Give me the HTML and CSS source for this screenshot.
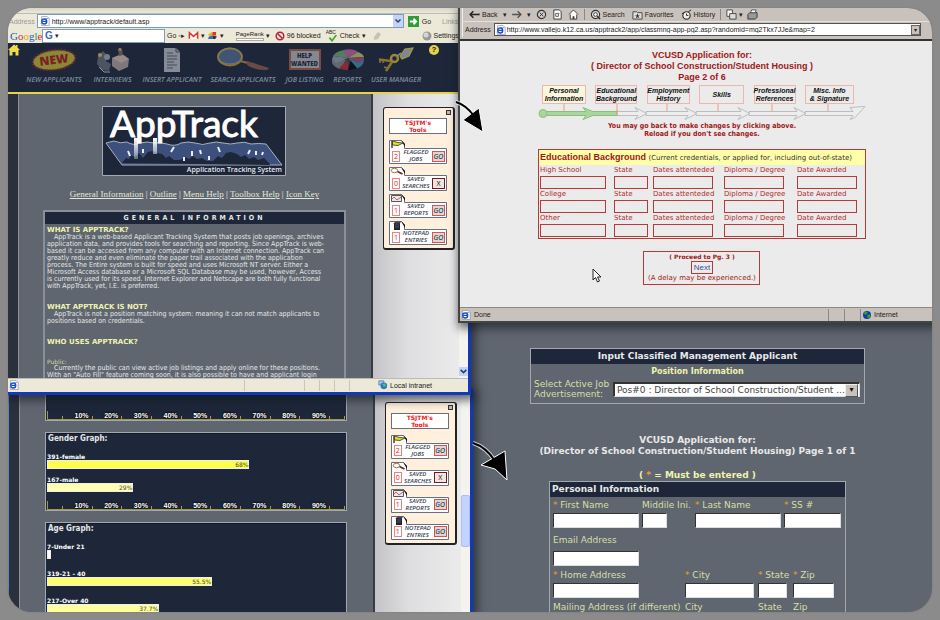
FILE: index.html
```
<!DOCTYPE html>
<html lang="en">
<head>
<meta charset="utf-8">
<title>AppTrack</title>
<link rel="stylesheet" href="styles.css">
</head>
<body>
<svg class="defs" aria-hidden="true">
  <symbol id="i-flag" viewBox="0 0 16 9"><path d="M3 1v7" stroke="#111" stroke-width="1.2"/><path d="M3.500 1L9 2.500L14 3L9 5.500L3.500 5z" fill="#dfe01a" stroke="#332" stroke-width=".8"/></symbol>
  <symbol id="i-lens" viewBox="0 0 16 9"><ellipse cx="5.500" cy="3.500" rx="3.200" ry="2.200" fill="#fff" stroke="#a5763d"/><path d="M8.500 4.500l5 2.500" stroke="#6d2b1c" stroke-width="1.800"/></symbol>
  <symbol id="i-mail" viewBox="0 0 16 9"><path d="M2.500 1.500h10v6h-10z" fill="#e8e8ee" stroke="#555"/><path d="M3 5l2-2 3 3 4-3" fill="none" stroke="#c33" stroke-width=".8"/></symbol>
  <symbol id="i-pad" viewBox="0 0 16 9"><path d="M5 2h6v7H5z" fill="#223"/><path d="M4 2.500l3-2h5l-1 2z" fill="#445"/><path d="M6 4h4M6 6h4" stroke="#778" stroke-width=".6"/></symbol>
  <symbol id="i-folder" viewBox="0 0 58 24"><path d="M.5 23.500V.5H12.500l3 3.500V8.500H57.500V23.500z" fill="#fff" stroke="#667083"/><path d="M12 0l4 4v3z" fill="#111"/></symbol>
  <symbol id="i-ie" viewBox="0 0 12 12"><path d="M2 .5h6.500l2.500 2.500v8.500H2z" fill="#fff" stroke="#888" stroke-width=".8"/><circle cx="5" cy="6.500" r="3" fill="none" stroke="#1a4ed0" stroke-width="1.800"/><path d="M2.500 6.500h5.500" stroke="#1a4ed0" stroke-width="1.400"/><path d="M1 9Q4 2 10 3" fill="none" stroke="#3a86e0" stroke-width=".8"/></symbol>
  <symbol id="i-globe" viewBox="0 0 12 12"><circle cx="6" cy="6" r="4.800" fill="#1238b0"/><path d="M2 4q2-3 4-2l1 2-3 2zM6 6l4-1 0 4-3 1z" fill="#28a428"/></symbol>
</svg>

<main class="desk">

  <section class="applicant">
    <div class="panel position">
      <h2>Input Classified Management Applicant</h2>
      <p class="sub">Position Information</p>
      <div class="pick">
        <label for="job">Select Active Job Advertisement:</label>
        <div class="drop"><select id="job"><option>Pos#0 : Director of School Construction/Student ...</option></select></div>
      </div>
    </div>
    <h1>VCUSD Application for:<br>(Director of School Construction/Student Housing) Page 1 of 1</h1>
    <p class="must">( <i>*</i> = Must be entered )</p>
    <form class="panel personal">
      <h2>Personal Information</h2>
      <div class="row names">
        <label><span><i>*</i> First Name</span><input type="text"></label>
        <label><span>Middile Ini.</span><input class="ini" type="text"></label>
        <label><span><i>*</i> Last Name</span><input type="text"></label>
        <label><span><i>*</i> SS #</span><input type="text"></label>
      </div>
      <div class="row email">
        <label><span>Email Address</span><input type="text"></label>
      </div>
      <div class="row home">
        <label><span><i>*</i> Home Address</span><input class="wide" type="text"></label>
        <label><span><i>*</i> City</span><input type="text"></label>
        <label><span><i>*</i> State</span><input type="text"></label>
        <label><span><i>*</i> Zip</span><input type="text"></label>
      </div>
      <div class="row home">
        <label><span>Mailing Address (if different)</span><input class="wide" type="text"></label>
        <label><span>City</span><input type="text"></label>
        <label><span>State</span><input type="text"></label>
        <label><span>Zip</span><input type="text"></label>
      </div>
    </form>
  </section>

  <section class="win graphs">
    <div class="body">
      <div class="page">
        <div class="panel graph first">
          <div class="axis"><span></span><span>10%</span><span>20%</span><span>30%</span><span>40%</span><span>50%</span><span>60%</span><span>70%</span><span>80%</span><span>90%</span><span></span></div>
        </div>
        <div class="panel graph">
          <h2>Gender Graph:</h2>
          <p>391-female</p><div class="bar b1" style="width:68%">68%</div>
          <p>167-male</p><div class="bar b4" style="width:29%">29%</div>
          <div class="axis"><span></span><span>10%</span><span>20%</span><span>30%</span><span>40%</span><span>50%</span><span>60%</span><span>70%</span><span>80%</span><span>90%</span><span></span></div>
        </div>
        <div class="panel graph age">
          <h2>Age Graph:</h2>
          <p>7-Under 21</p><div class="bar b0" style="width:1.2%"></div>
          <p>319-21 - 40</p><div class="bar b2" style="width:55.5%">55.5%</div>
          <p>217-Over 40</p><div class="bar b3" style="width:37.7%">37.7%</div>
        </div>
      </div>
      <aside class="side">
        <div class="tools">
          <button class="min" aria-label="Minimize"></button>
          <h3>TSJTM's<br>Tools</h3>
          <div class="tool"><svg class="folder"><use href="#i-folder"/></svg><svg class="ico"><use href="#i-flag"/></svg><b>2</b><span>FLAGGED<br>JOBS</span><button>GO</button></div>
          <div class="tool"><svg class="folder"><use href="#i-folder"/></svg><svg class="ico"><use href="#i-lens"/></svg><b>0</b><span>SAVED<br>SEARCHES</span><button class="x">X</button></div>
          <div class="tool"><svg class="folder"><use href="#i-folder"/></svg><svg class="ico"><use href="#i-mail"/></svg><b>1</b><span>SAVED<br>REPORTS</span><button>GO</button></div>
          <div class="tool"><svg class="folder"><use href="#i-folder"/></svg><svg class="ico"><use href="#i-pad"/></svg><b>1</b><span>NOTEPAD<br>ENTRIES</span><button>GO</button></div>
        </div>
      </aside>
      <div class="scroll"><i class="thumb"></i></div>
    </div>
  </section>

  <section class="win track">
    <header class="chrome">
      <div class="bar-address">
        <label for="addr1">Address</label>
        <div class="combo"><svg><use href="#i-ie"/></svg><input id="addr1" type="text" value="http://www/apptrack/default.asp"><button aria-label="Show addresses"><svg viewBox="0 0 8 8"><path d="M1.500 2.500L4 5l2.500-2.500" fill="none" stroke="#345" stroke-width="1.500"/></svg></button></div>
        <button class="go"><svg viewBox="0 0 12 12"><path d="M0 0h12v12H0z" fill="#2f9e3a"/><path d="M2 6h7M6 3l3 3-3 3" fill="none" stroke="#fff" stroke-width="2"/></svg>Go</button>
        <span class="links">Links</span>
      </div>
      <div class="bar-google">
        <span class="google"><b class="g1">G</b><b class="g2">o</b><b class="g3">o</b><b class="g1">g</b><b class="g4">l</b><b class="g2">e</b></span>
        <div class="search"><b>G</b><i>▾</i><input type="text" aria-label="Search"></div>
        <button class="t1">Go ◦▸</button>
        <svg class="t2" viewBox="0 0 12 9"><path d="M1 1h10v7H1z" fill="#fff"/><path d="M1.500 8V1.500L6 5.500l4.500-4V8" fill="none" stroke="#d8382e" stroke-width="1.700"/></svg>
        <span>▾</span>
        <svg class="t2" viewBox="0 0 12 10"><path d="M1 4l4-3 2 3-3 3z" fill="#e9b51d"/><path d="M6 1h4v4H6z" fill="#d43a2a"/><path d="M2 6l4-1 0 4H1z" fill="#3567d8"/><path d="M6 5l5 1-2 3H6z" fill="#333"/></svg>
        <span class="t3">▾</span>
        <span class="rank">PageRank<i></i></span><span>▾</span>
        <svg class="t4" viewBox="0 0 10 10"><path d="M1 1h8v8H1z" fill="#d9e3f5"/><circle cx="5" cy="5" r="3.800" fill="none" stroke="#c8202a" stroke-width="1.500"/><path d="M2.500 2.500l5 5" stroke="#c8202a" stroke-width="1.500"/></svg>
        <span class="t5">96 blocked</span>
        <span class="spell">ABC<svg viewBox="0 0 12 8"><path d="M3 3l3 3.500L11 0" fill="none" stroke="#4da62c" stroke-width="2"/></svg></span>
        <span>Check</span><span class="t7">▾</span>
        <svg class="t8" viewBox="0 0 10 10"><path d="M2 6l4-5 3 2-3 5-4 1z" fill="#c6c3b6"/></svg>
        <svg class="t9" viewBox="0 0 10 10"><circle cx="5" cy="5" r="4.500" fill="#9a9a9a"/><circle cx="4" cy="4" r="2.500" fill="#d5d5d5"/></svg>
        <span>Settings</span>
      </div>
    </header>
    <nav class="menu">
      <svg class="house" viewBox="0 0 12 12"><path d="M6 .5L0 6h1.500v5.500h3V8h3v3.500h3V6H12L9.500 3.500V1H8v1z" fill="#efdc4a"/></svg>
      <a href="#" class="m1"><svg viewBox="0 0 48 26"><g transform="rotate(-7 24 13)"><ellipse cx="24" cy="13" rx="21" ry="9.500" fill="#8b8736"/><ellipse cx="24" cy="13" rx="21.500" ry="10" fill="none" stroke="#7a2b2b" stroke-width="2" stroke-dasharray="1.500 1.500"/><text x="24" y="17" text-anchor="middle" class="newtxt">NEW</text></g></svg>NEW APPLICANTS</a>
      <a href="#" class="m2"><svg viewBox="0 0 36 26"><path d="M3 9l5-5 4 4-1 6 5 3-2 7-7-1-5-6z" fill="#4c5361"/><path d="M17 11l10-4 7 5-1 8-9 4-7-5z" fill="#80777a"/><path d="M17 11l10-4 7 5-8 4z" fill="#958b88"/><path d="M23 2l4 0 1 6-4 1z" fill="#58524c"/><circle cx="5" cy="8" r="2" fill="#a48a55"/><circle cx="25" cy="2.500" r="1.700" fill="#8b7a4e"/><path d="M4 20l5 5h6" stroke="#9095a0" fill="none"/><circle cx="12" cy="10" r="3" fill="#777c89"/></svg>INTERVIEWS</a>
      <a href="#" class="m3"><svg viewBox="0 0 20 26"><path d="M2 1h12l4 4v20H2z" fill="#868b96"/><path d="M14 1v4h4" fill="none" stroke="#3b4352"/><path d="M5 6h6M5 9h10M5 12h10M5 15h7M5 18h10M5 21h6" stroke="#414b62" stroke-width="1.200"/></svg>INSERT APPLICANT</a>
      <a href="#" class="m4"><svg viewBox="0 0 54 26"><ellipse cx="14" cy="10" rx="12" ry="8.500" fill="#405571" stroke="#8d7130" stroke-width="1.800"/><ellipse cx="14" cy="9" rx="12" ry="8" fill="none" stroke="#7c8084" stroke-width=".8"/><path d="M24 14l8 2" stroke="#806a4a" stroke-width="2"/><path d="M31 14l22 7-2 2q-14 0-20-5z" fill="#6b4a46"/></svg>SEARCH APPLICANTS</a>
      <a href="#" class="m5"><span class="wanted">HELP WANTED</span>JOB LISTING</a>
      <a href="#" class="m6"><svg viewBox="0 0 34 24"><path d="M1 10v5q3 7 16 7t16-7v-5z" fill="#303948"/><path d="M1 10v5q2 4 8 6l6-9z" fill="#5f6873"/><path d="M8 20q5 2 9 2V12z" fill="#8e2734"/><path d="M17 22q6 0 9-2l-6-9z" fill="#0d131d"/><path d="M26 20q7-2 7-10L18 11z" fill="#2c6f86"/><path d="M17 10L2 8Q5 3 14 2z" fill="#507e5e"/><path d="M17 10L12 2q10-2 15 2z" fill="#8c4f83"/><path d="M17 10l10-6q5 2 6 5z" fill="#8d9152"/><path d="M17 10l16-1q0 4-6 6z" fill="#7b3f68"/><path d="M2 8l15 2-12 5q-4-3-3-7z" fill="#6f7784"/></svg>REPORTS</a>
      <a href="#" class="m7"><svg viewBox="0 0 38 26"><g fill="none" stroke="#8c7230"><path d="M14 14L2 12.500" stroke-width="2.500"/><path d="M3 13v3M6 13v3" stroke-width="1.500"/><path d="M15 15L9 24" stroke-width="2.500"/><path d="M10 21l-3-1" stroke-width="1.500"/><circle cx="17.500" cy="11.500" r="3.500" stroke="#a08439" stroke-width="2.500"/></g><path d="M20 9l4-3" stroke="#8a8f99" stroke-width="1.500"/><path d="M23 9l5-7 8-1-4 8-7 3z" fill="#7c8895" stroke="#a99a37" stroke-width="1.200"/></svg>USER MANAGER</a>
      <a href="#" class="help" aria-label="Help">?</a>
    </nav>
    <div class="body">
      <div class="page">
        <svg class="logo" viewBox="0 0 184 70" role="img" aria-label="AppTrack Application Tracking System">
          <defs><linearGradient id="drip" x1="0" y1="0" x2="0" y2="1"><stop offset="0" stop-color="#fff"/><stop offset="1" stop-color="#fff" stop-opacity=".3"/></linearGradient></defs>
          <path d="M.5.5h183v69H.5z" fill="#1d2739" stroke="#a5a9b0"/>
          <path d="M4 37l8-2q6 3 13 1 6 4 13 1 7-2 14 0 6-1 13 1 8 3 14-1 7-2 14 0 8 3 15 0 6-2 13 0 8 2 14 0 8-2 14 1 8-1 15 0l16 21H20z" fill="#3d4f7c" stroke="#a9b0bd"/>
          <path d="M20 57l4-5 3 1 2-4 4 2 4-4 4 5 5-6 4-1 5 2 5 1 4 4 3-2 5 4 6 0 5-3 4 2 4-3 4 3 5-1 5 3 6 0 5-5 4 2 4-5 5-1 6 2 4 3 4-2 4 4 5-2 4 3 6-2 5 5 1 2z" fill="#1d2739"/>
          <path d="M28 50l-2-5M41 47l0-4M69 46l3-5M118 46l-2-5M82 55v-4M90 50l0-5M107 54v-4M99 48l-1-4M146 48l2-4M154 49v-4M160 49l1-3" stroke="#e9ecf3" stroke-width="2"/>
          <text class="logo-name" x="8" y="31">AppTrack</text>
          <path d="M32 32h4v21h-4zM51 32h4v16h-4z" fill="url(#drip)"/>
          <text class="logo-sub" x="180" y="66" text-anchor="end">Application Tracking System</text>
        </svg>
        <p class="toc"><a href="#">General Information</a> | <a href="#">Outline</a> | <a href="#">Menu Help</a> | <a href="#">Toolbox Help</a> | <a href="#">Icon Key</a></p>
        <article class="panel info">
          <h2>GENERAL INFORMATION</h2>
          <h3>WHAT IS APPTRACK?</h3>
          <p>AppTrack is a web-based Applicant Tracking System that posts job openings, archives<br>application data, and provides tools for searching and reporting. Since AppTrack is web-<br>based it can be accessed from any computer with an Internet connection. AppTrack can<br>greatly reduce and even eliminate the paper trail associated with the application<br>process. The Entire system is built for speed and uses Microsoft NT server. Either a<br>Microsoft Access database or a Microsoft SQL Database may be used, however, Access<br>is currently used for its speed. Internet Explorer and Netscape are both fully functional<br>with AppTrack, yet, I.E. is preferred.</p>
          <h3>WHAT APPTRACK IS NOT?</h3>
          <p>AppTrack is not a position matching system: meaning it can not match applicants to<br>positions based on credentials.</p>
          <h3>WHO USES APPTRACK?</h3>
          <h4>Public:</h4>
          <p>Currently the public can view active job listings and apply online for these positions.<br>With an "Auto Fill" feature coming soon, it is also possible to have and applicant login</p>
        </article>
      </div>
      <aside class="side">
        <div class="tools">
          <button class="min" aria-label="Minimize"></button>
          <h3>TSJTM's<br>Tools</h3>
          <div class="tool"><svg class="folder"><use href="#i-folder"/></svg><svg class="ico"><use href="#i-flag"/></svg><b>2</b><span>FLAGGED<br>JOBS</span><button>GO</button></div>
          <div class="tool"><svg class="folder"><use href="#i-folder"/></svg><svg class="ico"><use href="#i-lens"/></svg><b>0</b><span>SAVED<br>SEARCHES</span><button class="x">X</button></div>
          <div class="tool"><svg class="folder"><use href="#i-folder"/></svg><svg class="ico"><use href="#i-mail"/></svg><b>1</b><span>SAVED<br>REPORTS</span><button>GO</button></div>
          <div class="tool"><svg class="folder"><use href="#i-folder"/></svg><svg class="ico"><use href="#i-pad"/></svg><b>1</b><span>NOTEPAD<br>ENTRIES</span><button>GO</button></div>
        </div>
      </aside>
      <div class="scroll"><button class="down" aria-label="Scroll down"><svg viewBox="0 0 8 8"><path d="M1.500 2.500L4 5l2.500-2.500" fill="none" stroke="#345" stroke-width="1.500"/></svg></button></div>
    </div>
    <footer class="status"><svg class="st-ie"><use href="#i-ie"/></svg><i></i><i></i><i></i><i></i><i></i><span><svg viewBox="0 0 12 12"><path d="M1 1h6v5H1z" fill="#9fc6ea" stroke="#58a"/><circle cx="7" cy="7" r="4" fill="#2c74d0"/><path d="M5 5l3-1 2 3-3 1z" fill="#5ac05a"/></svg>Local intranet</span></footer>
  </section>

  <section class="win school">
    <header class="chrome2">
      <div class="nav-row">
        <button><svg viewBox="0 0 10 10"><path d="M4 2L1 5l3 3M1 5h8V4" fill="none" stroke="#222" stroke-width="1.300"/></svg>Back</button><span class="n0">▾</span>
        <svg class="n1" viewBox="0 0 10 10"><path d="M6 2l3 3-3 3M9 5H1" fill="none" stroke="#555" stroke-width="1.300"/></svg><span class="n2">▾</span>
        <svg class="n3" viewBox="0 0 12 12"><circle cx="6" cy="6" r="4.500" fill="#ccc" stroke="#333" stroke-width="1.300"/><path d="M4 4l4 4M8 4l-4 4" stroke="#333"/></svg>
        <svg class="n3" viewBox="0 0 12 12"><path d="M2 1h6l2 2v8H2z" fill="#fff" stroke="#333"/><path d="M4 5h3v3H4zM7 4l1 1" fill="none" stroke="#555"/></svg>
        <svg class="n3" viewBox="0 0 12 12"><path d="M1 6l5-5 5 5M2.500 6v5h7V6" fill="#fff" stroke="#333"/><path d="M5 8h2v3H5z" fill="#333"/></svg>
        <i class="sep"></i>
        <button class="n4"><svg viewBox="0 0 12 12"><circle cx="6" cy="6" r="4.500" fill="#ddd" stroke="#333" stroke-width="1.200"/><circle cx="6" cy="6" r="2" fill="#fff" stroke="#333"/><path d="M8 8l3 3" stroke="#222" stroke-width="1.500"/></svg>Search</button>
        <button class="n5"><svg viewBox="0 0 12 12"><path d="M1 3h4l1 1h5v7H1z" fill="#ddd" stroke="#444"/><path d="M6 5l1 2h2l-2 1 1 2-2-1-2 1 1-2-2-1h2z" fill="#333"/></svg>Favorites</button>
        <button class="n6"><svg viewBox="0 0 12 12"><circle cx="6" cy="7" r="4" fill="#eee" stroke="#333" stroke-width="1.300"/><path d="M6 5v2h2M8 3l3-2M1 5l3-1" fill="none" stroke="#222"/></svg>History</button>
        <i class="sep"></i>
        <svg class="n7" viewBox="0 0 12 12"><path d="M1 1h6v7H1z" fill="#fff" stroke="#444"/><path d="M4 5h7v6H4z" fill="#ddd" stroke="#444"/></svg><span>▾</span>
        <svg class="n8" viewBox="0 0 12 12"><path d="M1 6l2-2h8v5l-2 2H1z" fill="#999" stroke="#333"/><path d="M4 4l1-3h5L9 4z" fill="#fff" stroke="#333" stroke-width=".8"/></svg>
      </div>
      <div class="addr-row">
        <label for="addr2">Address</label>
        <div class="combo"><svg><use href="#i-ie"/></svg><input id="addr2" type="text" value="http://www.vallejo.k12.ca.us/apptrack2/app/classmng-app-pg2.asp?randomid=mq2Tkx7JJe&amp;map=2"><button aria-label="Show addresses">▾</button></div>
      </div>
    </header>
    <div class="form-page">
      <h1>VCUSD Application for:<br>( Director of School Construction/Student Housing )<br>Page 2 of 6</h1>
      <div class="steps">
        <div class="boxes">
          <a href="#" class="on">Personal<br>Information</a><a href="#">Educational<br>Background</a><a href="#">Employment<br>History</a><a href="#">Skills</a><a href="#">Professional<br>References</a><a href="#">Misc. Info<br>&amp; Signature</a>
        </div>
        <svg viewBox="0 0 328 18"><g stroke="#f0b5ab" stroke-width="1.500"><path d="M26 0v8M79 0v8M129 0v8M180 0v8M234 0v8M290 0v8"/></g>
          <g fill="#ededed" stroke="#bdbdbd"><path d="M78 7.500h22l-3-4 12 6-12 6 3-4H78zM108 7.500h42l-3-4 12 6-12 6 3-4h-42zM158 7.500h45l-3-4 12 6-12 6 3-4h-45zM211 7.500h48l-3-4 12 6-12 6 3-4h-48zM267 7.500h48l-3-4 15-1-10 11-5 2 3-4h-48z"/></g>
          <g fill="#a9d79b" stroke="#8cbf7f"><path d="M8 7.500h40l-3-4 10 4h24v4H55l-10 4 3-4H8z"/><circle cx="5" cy="9.500" r="4"/></g><path d="M79 6v6" stroke="#e39b90"/></svg>
      </div>
      <p class="hint">You may go back to make changes by clicking above.<br>Reload if you don't see changes.</p>
      <form class="edu">
        <h2>Educational Background <small>(Current credentials, or applied for, including out-of-state)</small></h2>
        <div class="edu-row">
          <label>High School<input type="text"></label><label>State<input type="text"></label><label>Dates attenteded<input type="text"></label><label>Diploma / Degree<input type="text"></label><label>Date Awarded<input type="text"></label>
        </div>
        <div class="edu-row">
          <label>College<input type="text"></label><label>State<input type="text"></label><label>Dates attenteded<input type="text"></label><label>Diploma / Degree<input type="text"></label><label>Date Awarded<input type="text"></label>
        </div>
        <div class="edu-row">
          <label>Other<input type="text"></label><label>State<input type="text"></label><label>Dates attenteded<input type="text"></label><label>Diploma / Degree<input type="text"></label><label>Date Awarded<input type="text"></label>
        </div>
      </form>
      <div class="proceed"><b>( Proceed to Pg. 3 )</b><button>Next</button><span>(A delay may be experienced.)</span></div>
    </div>
    <footer class="status2"><svg><use href="#i-ie"/></svg><span class="done">Done</span><i></i><i></i><span class="zone"><svg><use href="#i-globe"/></svg>Internet</span></footer>
  </section>

  <svg class="cursor" viewBox="0 0 10 15"><path d="M1 1v11l2.500-2.500L5.500 14l2-1-2-4H9z" fill="#fff" stroke="#222"/></svg>
  <svg class="arrow a1" viewBox="0 0 42 42"><path class="halo" d="M4 6Q14 9 22 20"/><path class="head" d="M11 24L27 12L31 36z"/><path class="shaft" d="M4 6Q14 9 22 20"/></svg>
  <svg class="arrow a2" viewBox="0 0 42 46"><path class="halo" d="M1 4Q14 8 23 22"/><path class="head" d="M9 26L33 12L35 41L23 30z"/><path class="shaft" d="M1 4Q14 8 23 22"/></svg>
</main>
</body>
</html>
```
FILE: styles.css
```
* { box-sizing: border-box; }
html, body { height: 100%; }
body { margin: 0; padding: 8px; background: #8b8b8b; font-family: "DejaVu Sans", Verdana, sans-serif; font-size: 8px; color: #e6e6e6; overflow: hidden; }
h1, h2, h3, h4, p { margin: 0; }
i { font-style: normal; }
button, input, select { font: inherit; color: inherit; padding: 0; margin: 0; border: 0; background: none; border-radius: 0; min-width: 0; }
svg { display: block; flex: none; }
.defs { position: absolute; width: 0; height: 0; }

.desk { position: relative; height: 100%; border-radius: 24px; overflow: hidden; background: #5f6670; box-shadow: 0 0 2px #777; }
.win { position: absolute; display: flex; flex-direction: column; overflow: hidden; }
.track { left: 0; top: 0; width: 50.1%; height: 64%; border: solid #1139b8; border-width: 0 3px 3px 0; background: #ece9d8; }
.graphs { left: 0; top: 63%; width: 50.3%; bottom: 0; border: solid #1139b8; border-width: 0 3px 0 1px; border-left-color: #5b85c4; }
.school { left: 48.7%; top: 0; width: 52.6%; height: 52.2%; background: #c9c1bb; border: solid #444; border-width: 0 0 2px 2px; }
.track, .school, .graphs { box-shadow: 2px 3px 9px 2px rgba(20, 24, 30, .65); }

/* shared page frame */
.body { flex: 1; min-height: 0; display: flex; }
.page { flex: 1; min-width: 0; background: #5f6670; border-left: 10px solid #2a313d; box-shadow: inset 1px 0 #8d929a; padding: 0 25px; overflow: hidden; }
.graphs .page { padding: 0 26px; }
.side { width: 88px; border-left: 2px solid #383c42; background: linear-gradient(90deg, #c4c4c8, #dedee0 40%, #ebebec); padding-left: 10px; }
.scroll { width: 9px; background: #f4f3ee; display: flex; flex-direction: column; justify-content: flex-end; }
.scroll .down { height: 9px; background: #c3d3fd; margin-bottom: 2px; }
.thumb { height: 52px; background: #c3d3fd; border: 1px solid #a9bff5; border-radius: 2px; margin-bottom: 65px; }
.panel { border: 1px solid #a3a8ae; }

/* toolbars */
.chrome { height: 35px; flex: none; padding-top: 5px; color: #222; font-family: "Liberation Sans", Arial, sans-serif; font-size: 7px; background: linear-gradient(#d8d5c6, #ece9d8 5px); overflow: hidden; }
.chrome div { display: flex; align-items: center; }
.chrome .bar-address { height: 15px; border-top: 1px solid #bbb; }
.bar-address > label { color: #999; padding-left: 1px; }
.chrome .combo { flex: none; width: 367px; height: 14px; margin-left: 2px; background: #fff; border: 1px solid #7f9db9; }
.combo svg { width: 10px; height: 10px; margin: 0 2px; }
.combo input { flex: 1; }
.chrome .combo button { width: 10px; background: #c3d3fd; height: 12px; }
.combo button svg { width: 8px; height: 8px; margin: 2px 1px; }
.go { display: flex; align-items: center; gap: 3px; margin-left: 4px; }
.go svg { width: 11px; height: 11px; }
.links { margin-left: 11px; color: #999; }
.chrome .bar-google { height: 15px; gap: 2px; white-space: nowrap; }
.google { font-family: "Liberation Serif", Georgia, serif; font-size: 11px; line-height: 12px; padding-left: 2px; width: 32px; }
.google b { font-weight: 400; }
.g1 { color: #2a56c6; } .g2 { color: #d0342c; } .g3 { color: #d9a514; } .g4 { color: #2d9b48; }
.chrome .search { width: 123px; flex: none; height: 14px; background: #fff; border: 1px solid #7f9db9; padding-left: 2px; gap: 2px; }
.search b { color: #3c66c8; font-size: 10px; }
.search input { flex: 1; }
.t1 { margin-right: 1px; }
.t2 { width: 11px; height: 9px; }
.t3 { margin-right: 10px; }
.rank { font-size: 6px; line-height: 6px; }
.rank i { display: block; height: 3px; border: 1px solid #aaa; background: #fff; margin-top: 1px; }
.t4 { width: 10px; height: 10px; margin-left: 3px; }
.t5 { margin-right: 3px; }
.spell { font-size: 5px; line-height: 5px; width: 12px; }
.spell svg { width: 12px; height: 7px; }
.t7 { margin-right: 4px; }
.t8 { width: 10px; height: 10px; margin-right: 38px; }
.t9 { width: 10px; height: 10px; }

/* icon menu */
.menu { flex: none; display: flex; align-items: flex-start; position: relative; height: 51px; background: #1d2739; border-bottom: 2px solid #e6d24c; padding: 4px 0 0 16px; font-family: "Open Sans", sans-serif; font-style: italic; font-weight: 600; font-size: 7px; }
.menu a { display: flex; flex-direction: column; align-items: center; gap: 2px; color: #8089a0; text-decoration: none; white-space: nowrap; line-height: 10px; flex: none; }
.menu a svg { height: 26px; }
.m1 { width: 60px; } .m1 svg { width: 48px; }
.m2 { width: 57px; } .m2 svg { width: 36px; }
.m3 { width: 62px; } .m3 svg { width: 20px; }
.m4 { width: 80px; } .m4 svg { width: 54px; }
.m5 { width: 43px; }
.m6 { width: 43px; } .m6 svg { width: 34px; }
.m7 { width: 54px; } .m7 svg { width: 38px; }
.newtxt { font: 800 12px "Open Sans", sans-serif; fill: #7a1f24; }
.wanted { width: 32px; height: 21px; margin: 2px 0 3px; padding: 1px 0; border: 2px solid #7b4a40; background: #84888f; color: #1d2739; font: 800 6px/8px "Open Sans", sans-serif; text-align: center; white-space: normal; }
.house { position: absolute; left: 0; top: 1px; width: 12px; height: 12px; }
.menu .help { position: absolute; right: 29px; top: 2px; width: 10px; height: 10px; border-radius: 50%; background: #e6d24c; color: #222; font: 700 8px/10px "Liberation Sans", sans-serif; display: block; text-align: center; }

/* AppTrack page */
.logo { width: 184px; height: 70px; margin: 12px auto 0; overflow: visible; }
.logo-name { font: 37px "Lato", sans-serif; fill: #fff; stroke: #fff; stroke-width: 1px; }
.logo-sub { font: 600 7px "Open Sans", sans-serif; fill: #e6e9f0; }
.toc { margin-top: 13px; text-align: center; font: 9px/11px "Liberation Serif", "Times New Roman", serif; white-space: nowrap; }
.toc a { color: #e2e8d6; }
.info { margin-top: 10px; border-width: 2px; border-color: #8b9097; white-space: nowrap; }
.info h2 { background: #1d2739; font: 700 7px/12px "DejaVu Sans Condensed", "DejaVu Sans", sans-serif; letter-spacing: 3px; text-align: center; }
.info h3 { color: #eff3ae; font-size: 7px; line-height: 8px; margin-top: 2px; padding-left: 2px; }
.info p { font: 7px/7px "DejaVu Sans Condensed", "DejaVu Sans", sans-serif; text-indent: 7px; padding-left: 2px; margin-bottom: 13px; }
.info h4 { color: #cfdc9a; font-weight: 400; font-size: 6px; line-height: 7px; margin-top: 12px; padding-left: 2px; }
.status { flex: none; height: 14px; display: flex; align-items: center; border-top: 1px solid #bbb; color: #222; font: 7px "Liberation Sans", sans-serif; padding-left: 1px; }
.status svg { width: 10px; height: 10px; }
.status i { width: 15px; height: 11px; border-left: 1px solid #c9c6b4; }
.st-ie { margin-right: 225px; }
.status i:nth-of-type(1) { width: 60px; }
.status i:nth-of-type(5) { width: 29px; }
.status span { display: flex; gap: 2px; align-items: center; }

/* toolbox */
.tools { position: relative; width: 72px; height: 143px; margin-top: 13px; padding: 10px 6px 0 5px; background: #fff0de; border: 1px solid #222; border-right-width: 2px; border-bottom-width: 2px; border-radius: 3px; }
.min { position: absolute; right: 2px; top: 2px; width: 5px; height: 5px; border: 1px solid #333; background: #bbb; }
.tools h3 { color: #f01818; background: #fff; border: 1px solid #667083; font-size: 6px; line-height: 7px; text-align: center; height: 16px; width: 58px; }
.tool { position: relative; width: 58px; height: 24px; margin-top: 3px; padding: 8px 2px 0 3px; display: grid; grid-template-columns: 8px 1fr 13px; align-items: center; font-family: "Open Sans", sans-serif; color: #333b4e; }
.tools h3 + .tool { margin-top: 6px; }
.folder { position: absolute; left: 0; top: 0; width: 58px; height: 24px; }
.ico { position: absolute; left: 0; top: 0; width: 16px; height: 9px; }
.tool b, .tool span, .tool button { position: relative; }
.tool b { border: 1px solid #f08080; color: #e02020; font-size: 7px; line-height: 9px; font-weight: 400; text-align: center; }
.tool span { font-size: 6px; font-weight: 600; font-style: italic; line-height: 7px; text-align: center; white-space: nowrap; }
.tool button { height: 11px; border: 1px solid #e05050; background: #d8d8d8; color: #111; font-size: 7px; line-height: 9px; font-style: italic; }
.tool .x { border-color: #6b2020; font-style: normal; background: #f4e4e0; }

/* graphs */
.graph { background: #1d2739; margin-bottom: 11px; padding: 0 1px; box-shadow: inset 0 1px #10182a; }
.graph h2 { font: 700 8px/11px "DejaVu Sans Condensed", "DejaVu Sans", sans-serif; padding-left: 1px; }
.graph p { font-size: 6px; font-weight: 700; line-height: 7px; margin-top: 7px; color: #fff; }
.graph h2 + p { margin-top: 9px; }
.graph.age p { margin-top: 11px; }
.graph.age h2 + p { margin-top: 9px; }
.bar { height: 9px; border: 1px solid #eee; color: #444; font-size: 6px; line-height: 7px; text-align: right; }
.b0 { background: #fff; } .b1 { background: #ffff4a; } .b2 { background: #ffff70; } .b3 { background: #ffff9a; } .b4 { background: #ffffb0; }
.axis { display: grid; grid-template-columns: 1fr repeat(9, 2fr) 1fr; height: 9px; margin-top: 9px; border-bottom: 1px solid #a39a45; border-left: 1px solid #a39a45; font: 700 7px/9px "Liberation Sans", sans-serif; color: #fff; text-align: right; }
.axis span { padding-right: 4px; position: relative; text-shadow: 0 0 2px #000, 0 0 2px #000; }
.axis span::after { content: ""; position: absolute; right: 0; bottom: 0; width: 1px; height: 4px; background: #a39a45; }
.first .axis { margin-top: 21px; }

/* school application window */
.chrome2 { flex: none; height: 33px; border-bottom: 2px solid #333; color: #222; font: 8px "Liberation Sans", Arial, sans-serif; }
.nav-row, .addr-row { display: flex; align-items: center; border-left: 1px solid #eee; margin-left: 2px; }
.nav-row { height: 13px; padding-left: 6px; gap: 2px; font-size: 7px; }
.nav-row button { display: flex; align-items: center; gap: 2px; }
.nav-row svg { width: 11px; height: 11px; }
.n0 { margin-left: 3px; }
.n1 { margin-left: 2px; }
.n2 { margin: 0 3px; }
.n3 { margin-right: 3px; }
.sep { width: 1px; height: 11px; background: #888; }
.nav-row .n4 { margin-left: 3px; }
.nav-row .n5 { margin-left: 5px; }
.nav-row .n6 { margin-left: 5px; margin-right: 3px; }
.n7 { margin-left: 3px; }
.n8 { margin-left: 2px; }
.addr-row { height: 16px; border-top: 1px solid #e5e0dc; padding-left: 2px; font-size: 7px; }
.addr-row .combo { display: flex; align-items: center; width: 427px; height: 13px; margin-left: 3px; background: #fff; border: 1px solid #555; }
.addr-row .combo svg { margin: 0 1px; }
.addr-row .combo button { width: 9px; height: 10px; background: #c9c1bb; border: 1px solid #666; font-size: 6px; line-height: 6px; }
.form-page { flex: 1; min-height: 0; background: #ebebeb; color: #a01818; display: flex; flex-direction: column; align-items: center; padding-top: 9px; }
.form-page h1 { font: 700 9px/11px "Liberation Sans", Arial, sans-serif; text-align: center; }
.steps { width: 328px; margin-top: 2px; }
.boxes { display: grid; grid-template-columns: 44px 42px 43px 45px 42px 49px; justify-content: space-between; padding: 0 12px 0 4px; height: 19px; }
.boxes a { display: flex; align-items: center; justify-content: center; border: 1px solid #f0b5ab; color: #111; text-decoration: none; text-align: center; font: italic 700 7px/8px "Liberation Sans", Arial, sans-serif; }
.boxes .on { background: #f9f7dc; }
.steps svg { width: 100%; height: 18px; }
.hint { font: 700 7px/8px "DejaVu Sans Condensed", "DejaVu Sans", sans-serif; text-align: center; }
.edu { width: 328px; margin-top: 11px; border: 1px solid #b53a3a; padding-bottom: 1px; color: #b02c2c; }
.edu h2 { background: #ffffaa; color: #a01818; font: 700 9px/15px "Liberation Sans", Arial, sans-serif; padding-left: 1px; white-space: nowrap; }
.edu small { font: 7px "DejaVu Sans", sans-serif; color: #333; }
.edu-row { display: grid; grid-template-columns: 74px 39px 71px 73px 1fr; padding-left: 1px; }
.edu label { display: block; font-size: 7px; line-height: 11px; white-space: nowrap; }
.edu input { display: block; width: 60px; height: 13px; border: 1px solid #b53a3a; background: #ebebeb; }
.edu label:nth-child(1) input { width: 66px; }
.edu label:nth-child(2) input { width: 34px; }
.proceed { margin-top: 12px; width: 117px; height: 34px; border: 1px solid #b53a3a; display: flex; flex-direction: column; align-items: center; font-size: 7px; line-height: 9px; white-space: nowrap; }
.proceed b { font-size: 6px; }
.proceed button { width: 22px; height: 13px; border: 1px solid #b53a3a; color: #44508c; font: 8px/11px "Liberation Sans", sans-serif; }
.status2 { flex: none; height: 14px; display: flex; align-items: center; color: #222; font: 7px "Liberation Sans", sans-serif; padding-left: 1px; border-top: 1px solid #888; }
.status2 svg { width: 10px; height: 10px; }
.done { padding-left: 3px; flex: 1; }
.status2 i { width: 16px; height: 12px; border-left: 1px solid #888; }
.zone { width: 84px; height: 12px; border-left: 1px solid #888; display: flex; align-items: center; gap: 2px; padding-left: 1px; }

/* classified applicant page */
.applicant { height: 100%; padding: 340px 8px 0 463px; display: flex; flex-direction: column; align-items: center; color: #d6dfa4; font-size: 9px; }
.applicant h1, .applicant h2, .must { font-size: 9px; font-weight: 700; line-height: 11px; color: #e8e8e8; white-space: nowrap; }
.applicant h1 { text-align: center; margin-top: 31px; }
.applicant .must { color: #eff3ae; margin-top: 13px; }
.must i, .row i { color: #f0a020; }
.position { width: 335px; height: 56px; flex: none; }
.applicant h2 { background: #1d2739; line-height: 15px; padding: 0 2px; }
.position h2, .sub { text-align: center; }
.sub { font-size: 8px; font-weight: 700; line-height: 15px; color: #eff3ae; }
.pick { display: flex; align-items: center; gap: 1px; padding: 0 4px 0 3px; line-height: 10px; }
.pick label { width: 78px; flex: none; }
.drop { position: relative; flex: 1; min-width: 0; height: 15px; }
.drop select { display: block; appearance: none; width: 100%; height: 100%; background: #fff; color: #444; border: 2px solid #333; border-right: 1px solid #ddd; border-bottom: 1px solid #ddd; padding-left: 2px; font-size: 9px; }
.drop::after { content: "▾"; position: absolute; right: 2px; top: 2px; width: 11px; height: 11px; background: #c9c1bb; border: 1px solid #555; border-top-color: #eee; border-left-color: #eee; color: #111; font-size: 8px; line-height: 9px; text-align: center; pointer-events: none; }
.personal { width: 297px; flex: none; }
.row { display: grid; padding: 0 3px; white-space: nowrap; }
.row span { display: block; line-height: 16px; }
.row input { display: block; height: 15px; background: #fff; border: 1px solid #333; border-right-color: #ddd; border-bottom-color: #ddd; width: 100%; }
.row.names { grid-template-columns: 89px 53px 89px 57px; }
.names label:nth-child(1) input, .names label:nth-child(3) input { width: 86px; }
.row .ini { width: 25px; }
.email { padding-top: 4px; }
.email input { width: 86px; margin-top: 3px; }
.home { grid-template-columns: 132px 73px 35px 41px; padding-top: 1px; }
.home label:nth-child(2) input { width: 69px; }
.home label:nth-child(3) input { width: 29px; }
.row .wide { width: 86px; }

.cursor { position: absolute; left: 584px; top: 260px; width: 10px; height: 15px; }
.arrow { position: absolute; overflow: visible; }
.halo { fill: none; stroke: #fff; stroke-width: 4; opacity: .7; }
.head { fill: #000; stroke: #fff; stroke-width: 1; }
.shaft { fill: none; stroke: #000; stroke-width: 2; }
.a1 { left: 444px; top: 88px; width: 42px; height: 42px; }
.a2 { left: 464px; top: 431px; width: 42px; height: 46px; }
```
